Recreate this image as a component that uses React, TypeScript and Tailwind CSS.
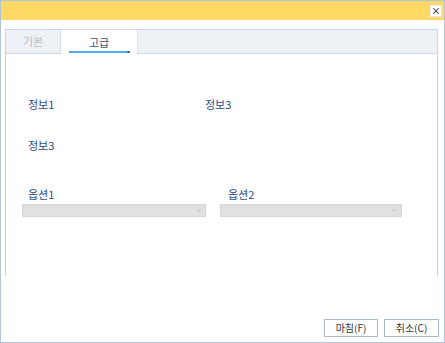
import { ChevronDown, X } from 'lucide-react'

const font = { fontFamily: '"Noto Sans CJK KR", "Noto Sans", sans-serif' }

function Select() {
  return (
    <div className="flex h-[13px] items-center justify-end border border-[#d6d6d6] bg-[#e1e1e1] pr-[3px]">
      <ChevronDown className="h-[7px] w-[7px] text-[#9a9a9a]" strokeWidth={2} />
    </div>
  )
}

export default function App() {
  return (
    <div
      style={font}
      className="flex h-[343px] w-[445px] flex-col border border-[#b3c4d6] bg-white text-[11px] leading-none"
    >
      <div className="flex h-[19px] items-center justify-end bg-[#ffd966] pr-[2px]">
        <div className="flex h-[12px] w-[12px] items-center justify-center border border-[#e8e8e8] bg-white">
          <X className="h-[10px] w-[10px] text-[#333]" strokeWidth={2.5} />
        </div>
      </div>

      <div className="mt-[9px] ml-[4px] mr-[6px] flex h-[247px] flex-col border-x border-t border-[#c3d4ea]">
        <div className="flex h-[24px] items-end border-b border-[#c9d8ea] bg-[#eef2f7]">
          <div className="flex h-[24px] w-[54px] items-center justify-center text-[#b8bcc4]">기본</div>
          <div className="relative -mb-px flex h-[25px] w-[78px] items-center justify-center border-x border-t border-[#d3dde9] bg-white text-[#33507c]">
            고급
            <div className="absolute bottom-[1px] left-[8px] flex h-[2px] w-[61px] justify-end bg-[#55aaf0]">
              <div className="h-[2px] w-[3px] bg-[#1f7fd6]" />
            </div>
          </div>
        </div>

        <div className="flex flex-col px-[22px] pt-[45px] text-[#2a4c84]">
          <div className="flex">
            <span className="w-[177px]">정보1</span>
            <span>정보3</span>
          </div>
          <span className="mt-[30px]">정보3</span>
          <div className="mt-[38px] -ml-[6px] flex gap-[14px]">
            <div className="flex w-[184px] flex-col">
              <span className="ml-[6px] mb-[4px]">옵션1</span>
              <Select />
            </div>
            <div className="flex w-[182px] flex-col">
              <span className="ml-[8px] mb-[4px]">옵션2</span>
              <Select />
            </div>
          </div>
        </div>
      </div>

      <div className="mt-auto mb-[5px] flex justify-end gap-[6px] pr-[5px] text-[10px] text-[#333]">
        <button className="flex h-[18px] w-[54px] items-center justify-center border border-[#a9bad0] bg-white">
          마침(F)
        </button>
        <button className="flex h-[18px] w-[55px] items-center justify-center border border-[#a9bad0] bg-white">
          취소(C)
        </button>
      </div>
    </div>
  )
}
